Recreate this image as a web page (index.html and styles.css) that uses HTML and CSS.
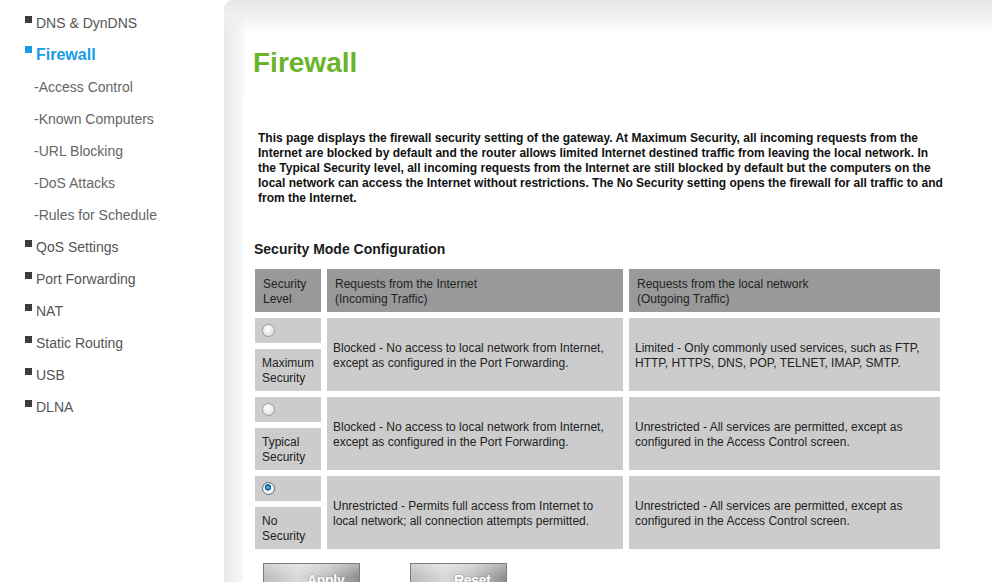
FILE: index.html
```html
<!DOCTYPE html>
<html>
<head>
<meta charset="utf-8">
<title>Firewall</title>
<link rel="stylesheet" href="styles.css">
</head>
<body>
<div class="page">
  <nav class="sidebar">
    <a class="nav-item">DNS &amp; DynDNS</a>
    <a class="nav-item active">Firewall</a>
    <a class="nav-sub">-Access Control</a>
    <a class="nav-sub">-Known Computers</a>
    <a class="nav-sub">-URL Blocking</a>
    <a class="nav-sub">-DoS Attacks</a>
    <a class="nav-sub">-Rules for Schedule</a>
    <a class="nav-item">QoS Settings</a>
    <a class="nav-item">Port Forwarding</a>
    <a class="nav-item">NAT</a>
    <a class="nav-item">Static Routing</a>
    <a class="nav-item">USB</a>
    <a class="nav-item">DLNA</a>
  </nav>
  <main class="main">
    <h1 class="title">Firewall</h1>
    <div class="content">
      <p class="intro">This page displays the firewall security setting of the gateway. At Maximum Security, all incoming requests from the Internet are blocked by default and the router allows limited Internet destined traffic from leaving the local network. In the Typical Security level, all incoming requests from the Internet are still blocked by default but the computers on the local network can access the Internet without restrictions. The No Security setting opens the firewall for all traffic to and from the Internet.</p>
      <h2 class="section">Security Mode Configuration</h2>
      <table class="modes">
        <colgroup><col class="c1"><col class="c2"><col class="c3"></colgroup>
        <tr class="head">
          <th>Security<br>Level</th>
          <th>Requests from the Internet<br>(Incoming Traffic)</th>
          <th>Requests from the local network<br>(Outgoing Traffic)</th>
        </tr>
        <tr class="radio-row">
          <td class="radio-cell"><input type="radio" name="mode" class="radio"></td>
          <td rowspan="2" class="desc">Blocked - No access to local network from Internet,<br>except as configured in the Port Forwarding.</td>
          <td rowspan="2" class="desc">Limited - Only commonly used services, such as FTP,<br>HTTP, HTTPS, DNS, POP, TELNET, IMAP, SMTP.</td>
        </tr>
        <tr class="label-row"><td class="label-cell">Maximum<br>Security</td></tr>
        <tr class="radio-row">
          <td class="radio-cell"><input type="radio" name="mode" class="radio"></td>
          <td rowspan="2" class="desc">Blocked - No access to local network from Internet,<br>except as configured in the Port Forwarding.</td>
          <td rowspan="2" class="desc">Unrestricted - All services are permitted, except as<br>configured in the Access Control screen.</td>
        </tr>
        <tr class="label-row"><td class="label-cell">Typical<br>Security</td></tr>
        <tr class="radio-row">
          <td class="radio-cell"><input type="radio" name="mode" class="radio" checked></td>
          <td rowspan="2" class="desc">Unrestricted - Permits full access from Internet to<br>local network; all connection attempts permitted.</td>
          <td rowspan="2" class="desc">Unrestricted - All services are permitted, except as<br>configured in the Access Control screen.</td>
        </tr>
        <tr class="label-row"><td class="label-cell">No<br>Security</td></tr>
      </table>
      <div class="actions">
        <button class="btn">Apply</button>
        <button class="btn">Reset</button>
      </div>
    </div>
  </main>
</div>
</body>
</html>
```
FILE: styles.css
```css
html, body {
  margin: 0;
  padding: 0;
  background: #ffffff;
  font-family: "Liberation Sans", Arial, sans-serif;
  overflow: hidden;
}
.page {
  display: flex;
  width: 992px;
  height: 582px;
}
.sidebar {
  width: 224px;
  flex: none;
  padding-top: 7px;
  display: flex;
  flex-direction: column;
}
.nav-item, .nav-sub {
  display: block;
  height: 32px;
  line-height: 32px;
  font-size: 14px;
  color: #555555;
  white-space: nowrap;
}
.nav-item {
  padding-left: 25px;
}
.nav-item::before {
  content: "";
  display: inline-block;
  width: 7px;
  height: 7px;
  background: #3d3d3d;
  margin-right: 4px;
  vertical-align: 5px;
}
.nav-item.active {
  color: #1a9be6;
  font-weight: bold;
  font-size: 16px;
}
.nav-item.active::before {
  background: #1a9be6;
  vertical-align: 7px;
}
.nav-sub {
  padding-left: 34px;
  color: #666666;
}
.main {
  flex: 1;
  padding-top: 47px;
  border-top-left-radius: 9px;
  background:
    linear-gradient(to bottom, #e6e6e6 0, #efefef 14px, rgba(255,255,255,0) 34px),
    linear-gradient(to right, #e8e8e8 0, #efefef 6px, #f5f5f5 16px, #ffffff 24px);
}
.title {
  margin: 0 0 0 29px;
  font-size: 28px;
  line-height: 32px;
  font-weight: bold;
  color: #6ab42a;
}
.content {
  margin: 16px 0 0 19px;
  padding-top: 36px;
  background: #ffffff;
  height: 500px;
}
.intro {
  margin: 0 0 0 15px;
  width: 686px;
  font-size: 12px;
  line-height: 15px;
  font-weight: bold;
  color: #111111;
}
.section {
  margin: 34px 0 5px 11px;
  font-size: 14px;
  line-height: 18px;
  font-weight: bold;
  color: #1a1a1a;
}
.modes {
  margin-left: 6px;
  border-collapse: separate;
  border-spacing: 6px;
  table-layout: fixed;
  width: 697px;
  font-size: 12px;
  line-height: 15px;
  color: #222222;
}
.c1 { width: 66px; }
.c2 { width: 296px; }
.c3 { width: 311px; }
.modes th {
  background: #999999;
  font-weight: normal;
  text-align: left;
  vertical-align: middle;
  height: 43px;
  box-sizing: border-box;
  padding: 3px 0 0 8px;
}
.modes td {
  background: #cccccc;
  vertical-align: middle;
  padding: 0;
}
.radio-row .radio-cell {
  height: 25px;
  padding-left: 7px;
}
.label-row .label-cell {
  height: 42px;
  box-sizing: border-box;
  padding: 2px 0 0 7px;
}
.modes td.desc {
  padding: 3px 0 0 6px;
}
.radio {
  -webkit-appearance: none;
  appearance: none;
  display: block;
  margin: 0;
  width: 13px;
  height: 13px;
  border-radius: 50%;
  border: 1px solid #9d9d9d;
  background: radial-gradient(circle at 40% 35%, #ffffff 0, #f2f2f2 35%, #d2d2d2 100%);
  box-sizing: border-box;
}
.radio:checked {
  border-color: #5d6f80;
  background:
    radial-gradient(circle at 45% 40%, #7cc8f5 0, #2b8fd0 1.5px, #0b4f8a 3px, rgba(0,0,0,0) 3.5px),
    radial-gradient(circle, #ffffff 0, #f4f4f4 60%, #cfcfcf 100%);
}
.actions {
  display: flex;
  gap: 50px;
  margin: 8px 0 0 20px;
}
.btn {
  width: 97px;
  height: 30px;
  padding: 4px 0 0 43px;
  box-sizing: border-box;
  border: 1px solid #8a7870;
  background:
    linear-gradient(to bottom, rgba(255,255,255,0.35) 0, rgba(255,255,255,0) 45%),
    linear-gradient(to right, #bdbdbd 0, #d9d9d9 35%, #c4c4c4 65%, #8e8e8e 100%);
  color: #ffffff;
  font-family: "Liberation Sans", Arial, sans-serif;
  font-size: 14px;
  font-weight: bold;
  letter-spacing: -0.3px;
  text-shadow: 0 0 2px #777777;
  text-align: left;
  vertical-align: top;
}
```
